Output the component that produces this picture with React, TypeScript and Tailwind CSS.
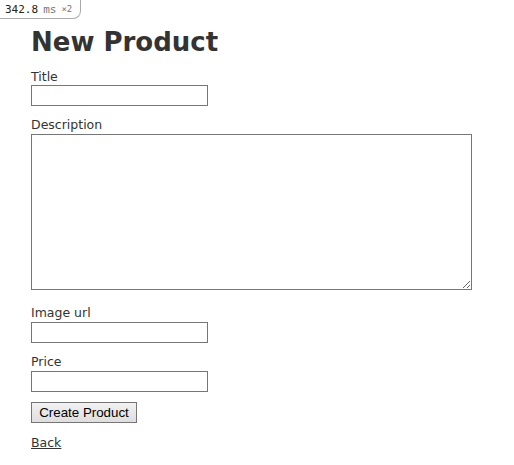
import React from "react";

export default function App() {
  return (
    <div className="relative min-h-[465px] w-[514px] bg-white text-[#333]" style={{ fontFamily: "'DejaVu Sans', Verdana, sans-serif" }}>
      <div className="absolute left-0 top-0 flex h-[19px] items-center gap-[5px] rounded-br-[8px] border-b border-r border-[#aaa] bg-white pl-[5px] pr-[8px] font-['DejaVu_Sans_Mono',monospace] text-[11px] leading-none">
        <span className="text-[#222]">342.8</span>
        <span className="text-[#777]">ms</span>
        <span className="text-[9px] text-[#777]">×2</span>
      </div>
      <div className="px-[31px] pt-[26px]">
        <h1 className="m-0 text-[26px] font-bold leading-[32px] text-[#333]">New Product</h1>
        <form className="mt-[11px] flex flex-col text-[12.5px] leading-[15px]">
          <div className="flex flex-col">
            <label>Title</label>
            <input className="mt-[1px] h-[21px] w-[177px] border border-[#767676] bg-white" />
          </div>
          <div className="mt-[11px] flex flex-col">
            <label>Description</label>
            <textarea className="mt-[2px] h-[156px] w-[441px] resize border border-[#767676] bg-white" />
          </div>
          <div className="mt-[15px] flex flex-col">
            <label>Image url</label>
            <input className="mt-[2px] h-[21px] w-[177px] border border-[#767676] bg-white" />
          </div>
          <div className="mt-[11px] flex flex-col">
            <label>Price</label>
            <input className="mt-[2px] h-[21px] w-[177px] border border-[#767676] bg-white" />
          </div>
          <div className="mt-[10px]">
            <button type="button" className="h-[21px] w-[106px] border border-[#767676] bg-gradient-to-b from-[#f2f2f2] to-[#dedede] font-['Liberation_Sans',Arial,sans-serif] text-[13.33px] leading-none text-black">Create Product</button>
          </div>
          <div className="mt-[12px]">
            <a href="#" className="text-[#333] underline">Back</a>
          </div>
        </form>
      </div>
    </div>
  );
}
